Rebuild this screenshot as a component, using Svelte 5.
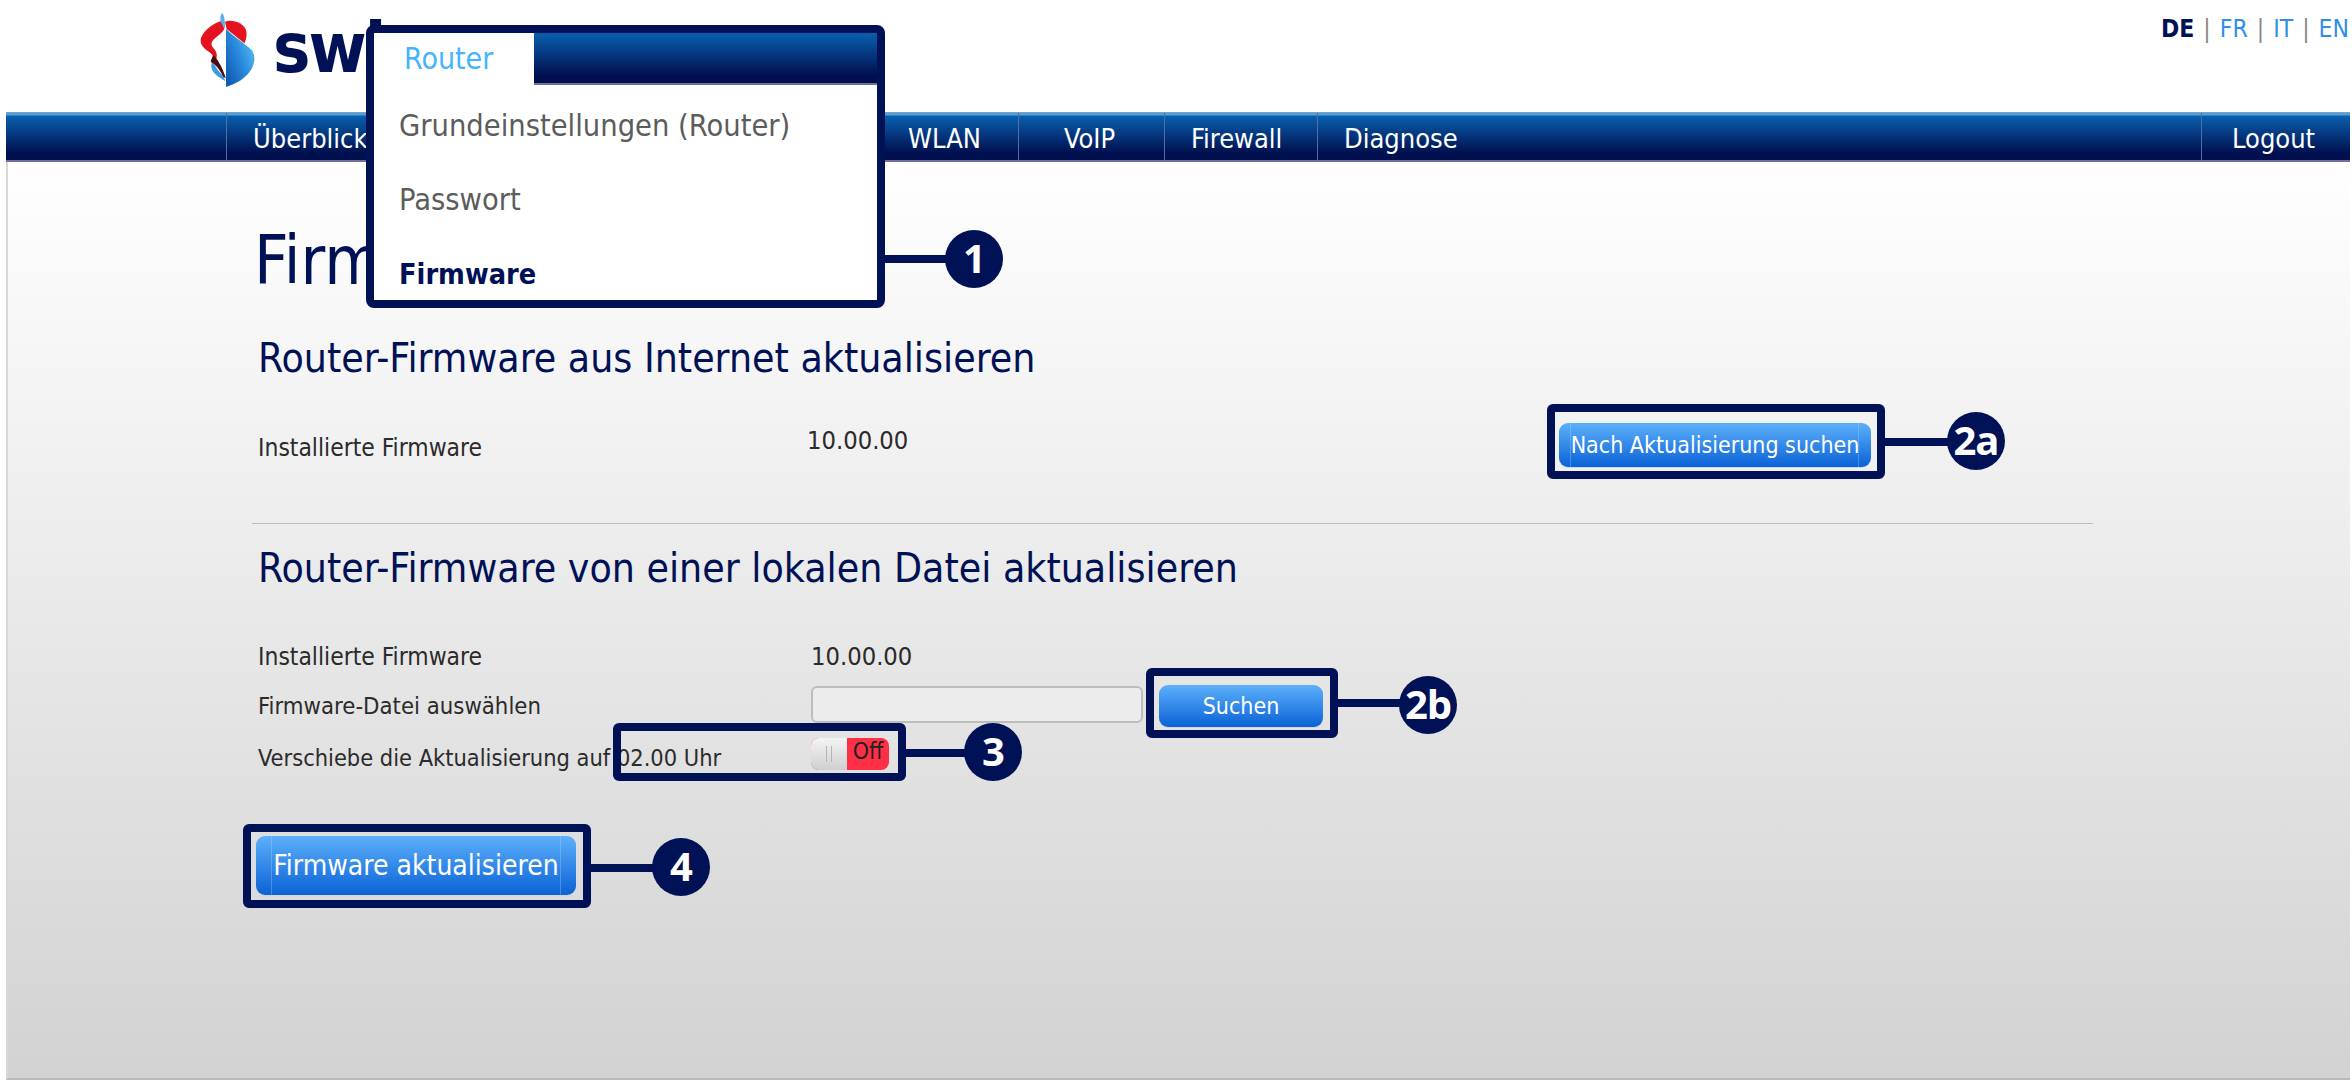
<script>
  const navLeft = ['Überblick', 'Router', 'Internet', 'WLAN', 'VoIP', 'Firewall', 'Diagnose'];
  const menu = ['Grundeinstellungen (Router)', 'Passwort'];
</script>

<div class="page">
  <header class="top">
    <div class="logo">
      <svg width="60" height="76" viewBox="30 24 180 228" aria-hidden="true">
        <defs>
          <linearGradient id="blue" x1="0" y1="1" x2="1" y2="0.2">
            <stop offset="0.1" stop-color="#0f5cb4" />
            <stop offset="0.55" stop-color="#2a8ade" />
            <stop offset="1" stop-color="#5cc0f4" />
          </linearGradient>
        </defs>
        <path d="M95 48 C65 55 32 85 32 108 C32 125 50 135 62 145 C72 152 70 160 62 170 L70 178 C80 165 85 150 75 135 C62 122 60 112 75 100 C85 92 95 85 103 72 Z" fill="#e5121f" />
        <path d="M105 50 C130 42 160 55 168 75 C172 90 168 105 163 115 L110 72 Z" fill="#e5121f" />
        <path d="M65 175 C60 190 70 205 85 215 L105 228 L102 215 C90 205 78 190 70 172 Z" fill="#3b9ae0" />
        <path d="M70 150 C85 165 98 190 108 220 L100 215 C90 195 78 180 62 168 Z" fill="#4a0c10" />
        <path d="M108 72 C130 95 165 115 185 135 C200 155 195 190 165 215 C150 230 125 240 108 246 Z" fill="url(#blue)" />
        <path d="M95 25 C100 25 105 35 105 70 C95 60 85 45 95 25 Z" fill="#57b0ea" />
      </svg>
      <span class="wordmark">swisscom</span>
    </div>
    <div class="lang">
      <b>DE</b><i>|</i><a href="#fr">FR</a><i>|</i><a href="#it">IT</a><i>|</i><a href="#en">EN</a>
    </div>
  </header>

  <nav class="nav">
    <div class="nav-left">
      {#each navLeft as item}
        <span class="nav-item">{item}</span>
      {/each}
    </div>
    <span class="nav-item logout">Logout</span>
  </nav>

  <main class="main">
    <h1>Firmware</h1>

    <section class="s1">
      <h2>Router-Firmware aus Internet aktualisieren</h2>
      <div class="row-a">
        <span class="label inst">Installierte Firmware</span>
        <span class="value">10.00.00</span>
        <button class="btn btn-search lined">Nach Aktualisierung suchen</button>
      </div>
    </section>

    <hr />

    <section class="s2">
      <h2>Router-Firmware von einer lokalen Datei aktualisieren</h2>
      <div class="form">
        <div class="line l1">
          <span class="label inst">Installierte Firmware</span>
          <span class="value">10.00.00</span>
        </div>
        <div class="line l2">
          <span class="label">Firmware-Datei auswählen</span>
          <span class="file"></span>
          <button class="btn btn-browse">Suchen</button>
        </div>
        <div class="line l3">
          <span class="label">Verschiebe die Aktualisierung auf 02.00 Uhr</span>
          <span class="toggle"><span class="knob"><s></s><s></s></span><span class="off">Off</span></span>
        </div>
      </div>
      <button class="btn btn-main lined">Firmware aktualisieren</button>
    </section>
  </main>

  <div class="menu">
    <div class="menu-tabs">
      <span class="menu-tab">Router</span>
      <span class="menu-fill"></span>
    </div>
    <div class="menu-list">
      {#each menu as m}
        <span class="menu-item">{m}</span>
      {/each}
      <span class="menu-item current">Firmware</span>
    </div>
  </div>

  <div class="box b2a"></div>
  <div class="box b2b"></div>
  <div class="box b3"></div>
  <div class="box b4"></div>

  <div class="link k1"></div>
  <div class="link k2a"></div>
  <div class="link k2b"></div>
  <div class="link k3"></div>
  <div class="link k4"></div>

  <div class="dot d1">1</div>
  <div class="dot d2a">2a</div>
  <div class="dot d2b">2b</div>
  <div class="dot d3">3</div>
  <div class="dot d4">4</div>
</div>

<style>
  :global(body) {
    margin: 0;
    background: #fff;
  }
  .page {
    position: relative;
    width: 2352px;
    height: 1090px;
    overflow: hidden;
    font-family: "DejaVu Sans Condensed", "DejaVu Sans", sans-serif;
    font-stretch: condensed;
    color: #2b2b2b;
  }
  .top {
    height: 112px;
    display: flex;
    justify-content: space-between;
    align-items: flex-start;
    box-sizing: border-box;
    padding: 0 3px 0 200px;
  }
  .logo {
    display: flex;
    align-items: flex-start;
    gap: 13px;
    padding-top: 13px;
  }
  .logo svg {
    display: block;
    flex: none;
  }
  .wordmark {
    font-size: 70px;
    font-weight: 700;
    color: #001155;
    line-height: 70px;
    letter-spacing: -2px;
  }
  .lang {
    display: flex;
    gap: 9px;
    font-size: 24.5px;
    line-height: 28px;
    padding-top: 15px;
  }
  .lang b {
    color: #001155;
  }
  .lang i {
    color: #888;
    font-style: normal;
  }
  .lang a {
    color: #2f8fe8;
    text-decoration: none;
  }
  .nav {
    margin-left: 6px;
    margin-right: 2px;
    height: 50px;
    display: flex;
    justify-content: space-between;
    box-sizing: border-box;
    padding-left: 220px;
    border-top: 1px solid #9a9a9a;
    border-bottom: 2px solid #6f7296;
    background: linear-gradient(#46a3ea 0, #46a3ea 2px, #0a5fae 3px, #00104f 85%, #000f50 100%);
  }
  .nav-left {
    display: flex;
  }
  .nav-item {
    color: #fff;
    font-size: 27px;
    line-height: 52px;
    padding: 0 0 0 26px;
    border-left: 1px solid #4d6ea6;
    white-space: nowrap;
    box-sizing: border-box;
  }
  .nav-left .nav-item:nth-child(1) {
    width: 166px;
  }
  .nav-left .nav-item:nth-child(2) {
    width: 240px;
  }
  .nav-left .nav-item:nth-child(3) {
    width: 249px;
  }
  .nav-left .nav-item:nth-child(4) {
    width: 137px;
  }
  .nav-left .nav-item:nth-child(5) {
    width: 146px;
    padding-left: 45px;
  }
  .nav-left .nav-item:nth-child(6) {
    width: 153px;
  }
  .nav-left .nav-item:nth-child(7) {
    padding-left: 26px;
  }
  .logout {
    width: 149px;
    padding-left: 30px;
  }
  .main {
    margin-left: 6px;
    margin-right: 2px;
    height: 918px;
    box-sizing: border-box;
    padding: 58px 257px 0 244px;
    background: linear-gradient(#ffffff, #d2d2d2);
    border-left: 2px solid #d8d8d8;
    border-bottom: 2px solid #b9b9b9;
  }
  h1 {
    margin: 0 0 0 2px;
    font-size: 67px;
    font-weight: 400;
    line-height: 82px;
    color: #001155;
  }
  h2 {
    margin: 0;
    padding-left: 6px;
    font-size: 40.6px;
    font-weight: 400;
    line-height: 50px;
    color: #001155;
  }
  .s1 h2 {
    margin-top: 31px;
  }
  .label {
    font-size: 23.7px;
    color: #2b2b2b;
  }
  .label.inst {
    font-size: 24.4px;
  }
  .value {
    font-size: 25.3px;
    color: #2b2b2b;
  }
  .row-a {
    display: grid;
    grid-template-columns: 549px 752px auto;
    align-items: center;
    margin-top: 40px;
    padding-left: 6px;
  }
  .row-a .label {
    transform: translateY(2px);
  }
  .row-a .value {
    margin-top: -10px;
  }
  .btn {
    position: relative;
    border: 0;
    font: inherit;
    font-stretch: condensed;
    color: #fff;
    border-radius: 9px;
    background: linear-gradient(#5db0fb, #0a62d6);
    box-shadow: 0 1px 0 #cfd6e6;
  }
  .lined::before,
  .lined::after {
    content: "";
    position: absolute;
    top: 0;
    bottom: 0;
    width: 1px;
    background: rgba(190, 215, 250, 0.3);
  }
  .lined::before {
    left: 11px;
  }
  .lined::after {
    right: 12px;
  }
  .btn-search {
    width: 312px;
    height: 44px;
    padding: 0;
    font-size: 23px;
  }
  hr {
    border: 0;
    border-top: 1px solid #bcbcbc;
    margin: 56px 0 0 0;
  }
  .s2 h2 {
    margin-top: 19px;
  }
  .form {
    margin-top: 43px;
    padding-left: 6px;
  }
  .line {
    display: flex;
    align-items: center;
  }
  .line .label {
    width: 553px;
    flex: none;
    white-space: nowrap;
  }
  .l1 {
    height: 40px;
  }
  .l2 {
    height: 52px;
    transform: translateY(4px);
  }
  .l3 {
    height: 50px;
    transform: translateY(3px);
  }
  .l3 .label {
    font-size: 23.4px;
    transform: translateY(2px);
  }
  .file {
    width: 332px;
    height: 37px;
    box-sizing: border-box;
    border: 2px solid #bdbdbd;
    border-radius: 6px;
    background: #ececec;
    transform: translateY(-2px);
  }
  .btn-browse {
    margin-left: 16px;
    width: 164px;
    height: 42px;
    padding: 0;
    font-size: 23px;
  }
  .toggle {
    width: 78px;
    height: 32px;
    display: flex;
    border-radius: 8px;
    overflow: hidden;
    background: #ff2f46;
    transform: translateY(-2px);
  }
  .knob {
    width: 36px;
    display: flex;
    gap: 4px;
    align-items: center;
    justify-content: center;
    background: linear-gradient(#f4f4f4, #cfcfcf);
  }
  .knob s {
    width: 1px;
    height: 16px;
    background: #b5b5b5;
  }
  .off {
    flex: 1;
    text-align: center;
    color: #222;
    font-size: 23px;
    line-height: 27px;
  }
  .btn-main {
    display: block;
    margin-top: 58px;
    margin-left: 4px;
    width: 320px;
    height: 59px;
    padding: 0;
    font-size: 28px;
  }
  .btn-main::before {
    left: 15px;
  }
  .btn-main::after {
    right: 15px;
  }
  .menu {
    position: absolute;
    left: 366px;
    top: 25px;
    width: 519px;
    height: 283px;
    box-sizing: border-box;
    border: 8px solid #001155;
    border-radius: 8px;
    background: #fff;
    overflow: hidden;
  }
  .menu-tabs {
    display: flex;
    height: 52px;
  }
  .menu-tab {
    width: 160px;
    box-sizing: border-box;
    padding-left: 30px;
    color: #45b4ff;
    font-size: 30px;
    line-height: 52px;
  }
  .menu-fill {
    flex: 1;
    background: linear-gradient(#0a5fae, #00104f 85%);
    border-bottom: 2px solid #6f7296;
  }
  .menu-list {
    display: flex;
    flex-direction: column;
    padding: 4px 0 0 25px;
  }
  .menu-item {
    font-size: 30.5px;
    line-height: 74px;
    color: #5c5c5c;
  }
  .current {
    font-weight: 700;
    font-size: 28.6px;
    color: #001155;
  }
  .box {
    position: absolute;
    box-sizing: border-box;
    border: 8px solid #001155;
    border-radius: 6px;
  }
  .b2a {
    left: 1547px;
    top: 404px;
    width: 338px;
    height: 75px;
  }
  .b2b {
    left: 1146px;
    top: 668px;
    width: 192px;
    height: 70px;
  }
  .b3 {
    left: 613px;
    top: 723px;
    width: 293px;
    height: 58px;
  }
  .b4 {
    left: 243px;
    top: 824px;
    width: 348px;
    height: 84px;
  }
  .link {
    position: absolute;
    height: 8px;
    background: #001155;
  }
  .k1 {
    left: 885px;
    top: 255px;
    width: 70px;
  }
  .k2a {
    left: 1885px;
    top: 438px;
    width: 70px;
  }
  .k2b {
    left: 1338px;
    top: 699px;
    width: 70px;
  }
  .k3 {
    left: 906px;
    top: 749px;
    width: 70px;
  }
  .k4 {
    left: 591px;
    top: 864px;
    width: 70px;
  }
  .dot {
    position: absolute;
    width: 58px;
    height: 58px;
    border-radius: 50%;
    background: #001155;
    color: #fff;
    font-family: "Open Sans", sans-serif;
    font-stretch: normal;
    font-weight: 700;
    font-size: 40px;
    line-height: 56px;
    text-align: center;
    letter-spacing: -1px;
  }
  .d1 {
    left: 945px;
    top: 230px;
  }
  .d2a {
    left: 1947px;
    top: 412px;
  }
  .d2b {
    left: 1399px;
    top: 676px;
  }
  .d3 {
    left: 964px;
    top: 723px;
  }
  .d4 {
    left: 652px;
    top: 838px;
  }
</style>
